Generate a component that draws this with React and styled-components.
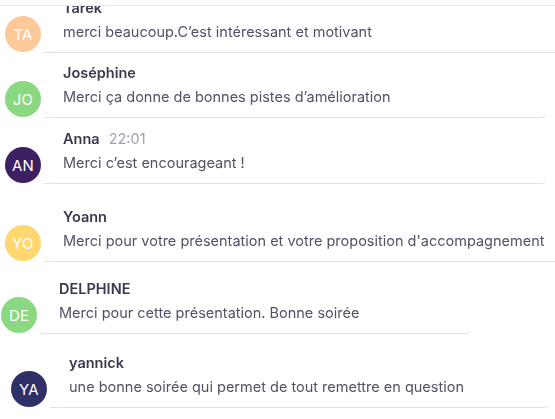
import React from 'react';
import styled, { createGlobalStyle } from 'styled-components';

const GlobalStyle = createGlobalStyle`
  html, body {
    margin: 0;
    padding: 0;
    background: #ffffff;
    overflow: hidden;
  }
  body {
    font-family: Inter, "Noto Sans", Arial, sans-serif;
  }
`;

const Page = styled.div`
  width: 555px;
  height: 419px;
  display: flex;
  flex-direction: column;
  background: #ffffff;
`;

const TopBar = styled.div`
  height: 5px;
  flex-shrink: 0;
  border-bottom: 1px solid #ececef;
`;

const Feed = styled.div`
  flex: 1;
  overflow: hidden;
`;

const List = styled.div`
  display: flex;
  flex-direction: column;
  gap: 6px;
  margin-top: -12px;
`;

const Row = styled.div`
  display: flex;
  align-items: flex-end;
  gap: 8px;
  padding-left: ${(p) => p.$indent}px;
`;

const Avatar = styled.div`
  width: 36px;
  height: 36px;
  flex-shrink: 0;
  border-radius: 50%;
  background: ${(p) => p.$color};
  color: #ffffff;
  font-size: 15px;
  display: flex;
  align-items: center;
  justify-content: center;
  letter-spacing: 0.2px;
`;

const Bubble = styled.div`
  position: relative;
  flex-shrink: 0;
  width: ${(p) => p.$width}px;
  box-sizing: border-box;
  padding: ${(p) => p.$top}px 14px 10px 14px;
  background: #ffffff;
  border-radius: 4px;
  display: flex;
  flex-direction: column;
  gap: 4px;
  filter: drop-shadow(0 1.5px 0.6px rgba(30, 30, 60, 0.13))
    drop-shadow(0 0 0.6px rgba(30, 30, 60, 0.1));

  &::before {
    content: '';
    position: absolute;
    left: -5px;
    bottom: 0;
    border-top: 7px solid transparent;
    border-right: 6px solid #ffffff;
  }
`;

const Meta = styled.div`
  display: flex;
  align-items: baseline;
  gap: 9px;
  line-height: 20px;
`;

const Name = styled.span`
  font-size: 14.5px;
  font-weight: 600;
  color: #3a3a4e;
`;

const Time = styled.span`
  font-size: 14.5px;
  color: #a0a0b0;
`;

const Text = styled.div`
  font-size: 14.5px;
  line-height: 20px;
  color: #525267;
  white-space: nowrap;
`;

const messages = [
  { initials: 'TA', color: '#fdc999', name: 'Tarek', text: 'merci beaucoup.C’est intéressant et motivant', indent: 5, width: 520, top: 4 },
  { initials: 'JO', color: '#8bd883', name: 'Joséphine', text: 'Merci ça donne de bonnes pistes d’amélioration', indent: 5, width: 496, top: 5 },
  { initials: 'AN', color: '#3d1f63', name: 'Anna', time: '22:01', text: 'Merci c’est encourageant !', indent: 5, width: 496, top: 6 },
  { initials: 'YO', color: '#ffd771', name: 'Yoann', text: 'Merci pour votre présentation et votre proposition d\'accompagnement', indent: 5, width: 520, top: 18 },
  { initials: 'DE', color: '#8bd883', name: 'DELPHINE', text: 'Merci pour cette présentation. Bonne soirée', indent: 1, width: 425, top: 12 },
  { initials: 'YA', color: '#2f3068', name: 'yannick', text: 'une bonne soirée qui permet de tout remettre en question', indent: 11, width: 493, top: 14 },
];

function Message({ initials, color, name, time, text, indent, width, top }) {
  return (
    <Row $indent={indent}>
      <Avatar $color={color}>{initials}</Avatar>
      <Bubble $width={width} $top={top}>
        <Meta>
          <Name>{name}</Name>
          {time && <Time>{time}</Time>}
        </Meta>
        <Text>{text}</Text>
      </Bubble>
    </Row>
  );
}

export default function App() {
  return (
    <Page>
      <GlobalStyle />
      <TopBar />
      <Feed>
        <List>
          {messages.map((m) => (
            <Message key={m.initials + m.name} {...m} />
          ))}
        </List>
      </Feed>
    </Page>
  );
}
